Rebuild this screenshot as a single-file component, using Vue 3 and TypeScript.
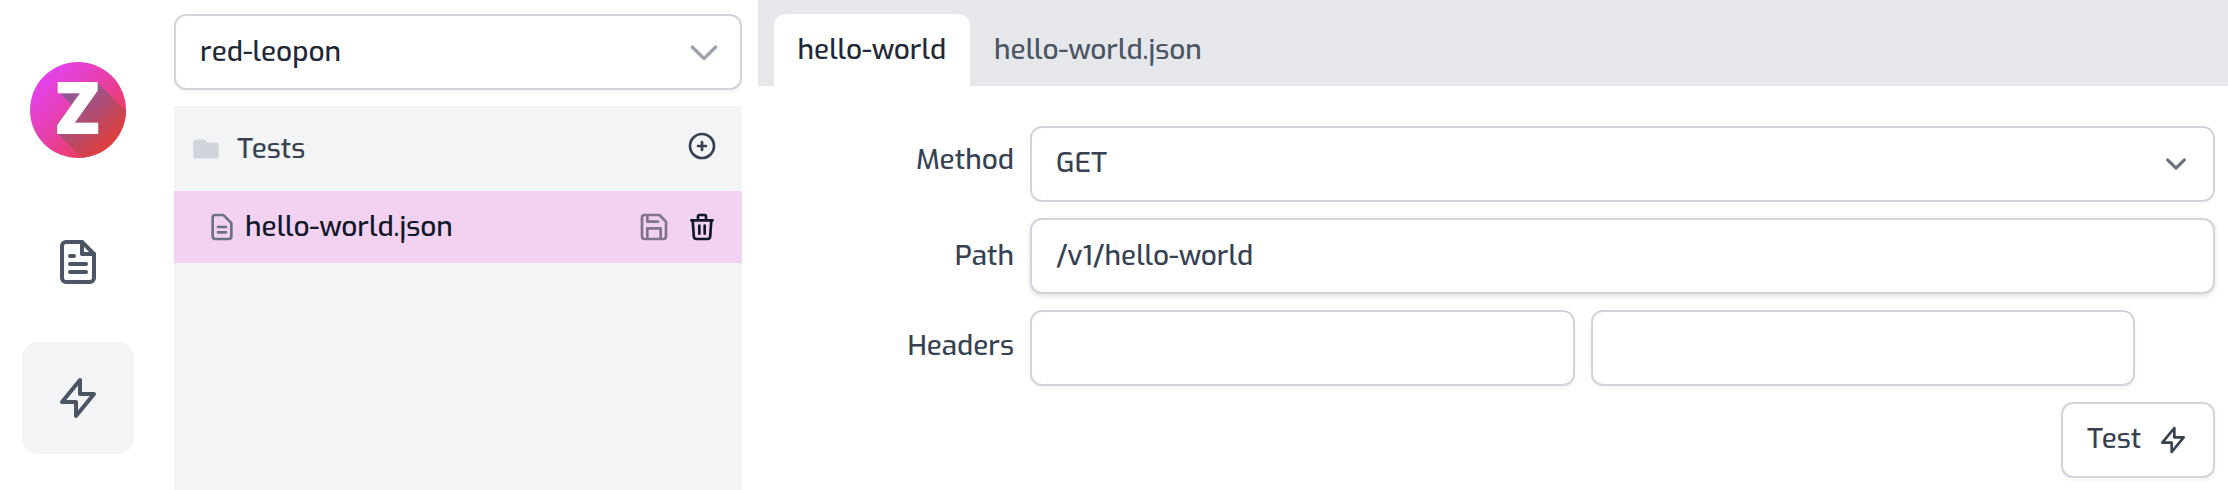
<script setup lang="ts">
import { ref } from 'vue'

interface Tab {
  id: string
  title: string
}

const project = ref('red-leopon')
const tabs: Tab[] = [
  { id: 'name', title: 'hello-world' },
  { id: 'file', title: 'hello-world.json' },
]
const activeTab = ref('name')
const method = ref('GET')
const path = ref('/v1/hello-world')

const boltPath = 'M13 10V3L4 14h7v7l9-11h-7z'
</script>

<template>
  <div class="app">
    <nav class="rail">
      <svg class="logo" viewBox="0 0 96 96" aria-label="Z">
        <defs>
          <linearGradient id="disc" x1="0.15" y1="0.15" x2="0.85" y2="0.85">
            <stop offset="0" stop-color="#e242ec" />
            <stop offset="0.5" stop-color="#e83fa4" />
            <stop offset="0.85" stop-color="#ec3c66" />
            <stop offset="1" stop-color="#ee3f44" />
          </linearGradient>
          <linearGradient id="shade" gradientUnits="userSpaceOnUse" x1="34" y1="30" x2="80" y2="80">
            <stop offset="0" stop-color="#8d5a97" />
            <stop offset="0.4" stop-color="#a5507f" />
            <stop offset="1" stop-color="#dc403f" />
          </linearGradient>
          <clipPath id="round"><circle cx="48" cy="48" r="48" /></clipPath>
        </defs>
        <g clip-path="url(#round)">
          <rect width="96" height="96" fill="url(#disc)" />
          <path d="M29 30L67 20l53 53-40 51-53-53V62l15-19z" fill="url(#shade)" />
        </g>
        <text class="mark" x="25" y="72" textLength="45" lengthAdjust="spacingAndGlyphs">Z</text>
      </svg>
      <button class="tile">
        <svg class="icon large" viewBox="0 0 24 24">
          <path d="M14 2H6a2 2 0 0 0-2 2v16a2 2 0 0 0 2 2h12a2 2 0 0 0 2-2V8z" />
          <path d="M14 2v6h6M16 13H8M16 17H8M10 9H8" />
        </svg>
      </button>
      <button class="tile selected">
        <svg class="icon large" viewBox="0 0 24 24"><path :d="boltPath" /></svg>
      </button>
    </nav>

    <aside class="files">
      <div class="box project">
        <span class="text">{{ project }}</span>
        <svg class="icon chevron" viewBox="0 0 24 24"><path d="M19 9l-7 7-7-7" /></svg>
      </div>
      <div class="tree">
        <div class="folder">
          <svg class="icon folder-icon" viewBox="0 0 20 20">
            <path d="M2 6a2 2 0 012-2h5l2 2h5a2 2 0 012 2v6a2 2 0 01-2 2H4a2 2 0 01-2-2V6z" />
          </svg>
          <span class="text">Tests</span>
          <svg class="icon add" viewBox="0 0 24 24">
            <path d="M12 9v3m0 0v3m0-3h3m-3 0H9m12 0a9 9 0 11-18 0 9 9 0 0118 0z" />
          </svg>
        </div>
        <div class="file">
          <svg class="icon file-icon" viewBox="0 0 24 24">
            <path d="M9 12h6m-6 4h6m2 5H7a2 2 0 01-2-2V5a2 2 0 012-2h5.586a1 1 0 01.707.293l5.414 5.414a1 1 0 01.293.707V19a2 2 0 01-2 2z" />
          </svg>
          <span class="text">hello-world.json</span>
          <svg class="icon save" viewBox="0 0 24 24">
            <path d="M19 21H5a2 2 0 0 1-2-2V5a2 2 0 0 1 2-2h11l5 5v11a2 2 0 0 1-2 2zM17 21v-8H7v8M7 3v5h8" />
          </svg>
          <svg class="icon trash" viewBox="0 0 24 24">
            <path d="M19 7l-.867 12.142A2 2 0 0116.138 21H7.862a2 2 0 01-1.995-1.858L5 7m5 4v6m4-6v6m1-10V4a1 1 0 00-1-1h-4a1 1 0 00-1 1v3M4 7h16" />
          </svg>
        </div>
      </div>
    </aside>

    <main class="editor">
      <div class="tabs">
        <div
          v-for="tab in tabs"
          :key="tab.id"
          class="tab"
          :class="{ active: tab.id === activeTab }"
          @click="activeTab = tab.id"
        >
          <span class="text">{{ tab.title }}</span>
        </div>
      </div>
      <div class="form">
        <div class="row method">
          <label class="label"><span class="text">Method</span></label>
          <div class="box flat">
            <span class="text">{{ method }}</span>
            <svg class="icon caret" viewBox="0 0 20 20"><path d="M6 8l4 4 4-4" /></svg>
          </div>
        </div>
        <div class="row path">
          <label class="label"><span class="text">Path</span></label>
          <div class="box raised"><span class="text">{{ path }}</span></div>
        </div>
        <div class="row headers">
          <label class="label"><span class="text">Headers</span></label>
          <div class="pair">
            <div class="box"></div>
            <div class="box"></div>
          </div>
        </div>
        <div class="actions">
          <button class="box run">
            <span class="text">Test</span>
            <svg class="icon" viewBox="0 0 24 24"><path :d="boltPath" /></svg>
          </button>
        </div>
      </div>
    </main>
  </div>
</template>

<style>
body {
  margin: 0;
  overflow: hidden;
}
</style>

<style scoped>
.app {
  display: flex;
  width: 2228px;
  height: 490px;
  overflow: hidden;
  background: #fff;
  color: #374151;
  font-family: Exo, 'Exo 2', Roboto, 'Noto Sans', sans-serif;
  font-size: 28px;
  font-weight: 500;
  line-height: 40px;
}
.app *,
.app {
  box-sizing: border-box;
}
button {
  font: inherit;
  color: inherit;
  border: 0;
  background: none;
  padding: 0;
}
.text {
  display: block;
  white-space: nowrap;
}
.icon {
  display: block;
  flex: none;
  align-self: center;
  width: 32px;
  height: 32px;
  fill: none;
  stroke: currentColor;
  stroke-width: 2;
  stroke-linecap: round;
  stroke-linejoin: round;
}
.icon.large {
  width: 48px;
  height: 48px;
}

.rail {
  width: 174px;
  flex: none;
  padding: 62px 0 0 22px;
}
.logo {
  display: block;
  width: 96px;
  height: 96px;
  margin: 0 0 48px 8px;
  overflow: visible;
}
.mark {
  font-family: 'Open Sans', 'Noto Sans', sans-serif;
  font-size: 73px;
  font-weight: 800;
  fill: #fff;
}
.tile {
  display: flex;
  justify-content: center;
  width: 112px;
  height: 112px;
  margin-bottom: 24px;
  border-radius: 16px;
  color: #4b5563;
}
.tile.selected {
  background: #f3f4f6;
}

.box {
  display: flex;
  align-items: flex-start;
  height: 76px;
  border: 2px solid #d1d5db;
  border-radius: 12px;
  background: #fff;
  box-shadow: 0 2px 4px rgba(0, 0, 0, 0.05);
}
.box.flat {
  box-shadow: none;
}
.box.raised {
  box-shadow: 0 2px 5px rgba(0, 0, 0, 0.13);
}

.files {
  display: flex;
  flex-direction: column;
  gap: 16px;
  width: 568px;
  flex: none;
  padding-top: 14px;
}
.project {
  flex: none;
  justify-content: space-between;
  padding: 16px 16px 0 24px;
  color: #1f2937;
}
.chevron {
  width: 40px;
  height: 40px;
  align-self: flex-start;
  color: #9ca3af;
}
.tree {
  flex: 1;
  background: #f3f4f6;
}
.folder,
.file {
  display: flex;
  align-items: flex-start;
}
.folder {
  height: 85px;
  padding: 0 24px 0 16px;
}
.folder .text {
  margin: 23px 0 0 15px;
}
.folder-icon {
  fill: #d1d5db;
  stroke: none;
}
.add {
  align-self: flex-start;
  margin: 24px 0 0 auto;
}
.file {
  height: 72px;
  padding: 0 24px 0 32px;
  background: #f2d1f1;
  color: #111827;
}
.file .text {
  margin: 16px 0 0 7px;
}
.file-icon {
  color: #6b7280;
}
.save {
  margin: 0 16px 0 auto;
  opacity: 0.5;
}

.editor {
  flex: 1;
  min-width: 0;
  margin-left: 16px;
}
.tabs {
  display: flex;
  height: 86px;
  padding: 14px 0 0 16px;
  background: #e5e7eb;
}
.tab {
  padding: 16px 24px 0 24px;
  border-radius: 12px 12px 0 0;
  color: #4b5563;
}
.tab.active {
  width: 196px;
  padding: 16px 0 0 23.5px;
  background: #fff;
  color: #1f2937;
}
.form {
  display: flex;
  flex-direction: column;
  gap: 16px;
  padding: 40px 13px 0 0;
}
.row {
  display: grid;
  grid-template-columns: 256px 1fr;
  column-gap: 16px;
}
.label {
  display: flex;
  justify-content: flex-end;
  align-items: flex-start;
}
.method .label {
  padding-top: 14px;
}
.path .label {
  padding-top: 18px;
}
.headers .label {
  padding-top: 16px;
}
.method .box {
  justify-content: space-between;
  padding: 0 16px 0 24px;
}
.method .box .text {
  margin-top: 15px;
}
.caret {
  width: 42px;
  height: 42px;
  color: #6b7280;
  stroke-width: 1.5;
}
.path .box {
  padding: 16px 24px 0;
}
.pair {
  display: grid;
  grid-template-columns: 545px 544px;
  column-gap: 16px;
}
.actions {
  display: flex;
  justify-content: flex-end;
}
.run {
  width: 154px;
  justify-content: space-between;
  padding: 0 24px;
}
.run .text {
  margin-top: 15px;
}
</style>
